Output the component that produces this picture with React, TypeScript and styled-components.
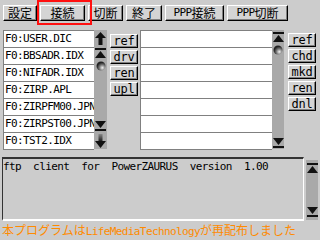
import React from "react";
import styled, { createGlobalStyle } from "styled-components";

const mono = `"DejaVu Sans Mono", "Liberation Mono", monospace`;
const jp = `"Noto Sans CJK JP", "Noto Sans", sans-serif`;

const GlobalStyle = createGlobalStyle`
    html, body {
        margin: 0;
        padding: 0;
        background: #cccccc;
    }
`

const leftFiles = [
    "F0:USER.DIC",
    "F0:BBSADR.IDX",
    "F0:NIFADR.IDX",
    "F0:ZIRP.APL",
    "F0:ZIRPFM00.JPN",
    "F0:ZIRPST00.JPN",
    "F0:TST2.IDX",
];

const UpArrow = () => (
    <svg width="11" height="13" viewBox="0 0 11 13">
        <polygon points="5.5,0 11,6 7.5,6 7.5,13 3.5,13 3.5,6 0,6" fill="#111" />
    </svg>
)

const DownArrow = () => (
    <svg width="11" height="14" viewBox="0 0 11 14">
        <defs>
            <linearGradient id="stem" x1="0" y1="0" x2="0" y2="1">
                <stop offset="0" stopColor="#888" />
                <stop offset="1" stopColor="#111" />
            </linearGradient>
        </defs>
        <rect x="3.5" y="0" width="4" height="8" fill="url(#stem)" />
        <polygon points="0,7 11,7 5.5,14" fill="#111" />
    </svg>
)

const ToTop = () => (
    <svg width="11" height="10" viewBox="0 0 11 10">
        <rect x="0" y="0" width="11" height="2" fill="#111" />
        <polygon points="5.5,3 11,10 0,10" fill="#111" />
    </svg>
)

const ToBottom = () => (
    <svg width="11" height="10" viewBox="0 0 11 10">
        <polygon points="0,0 11,0 5.5,7" fill="#111" />
        <rect x="0" y="8" width="11" height="2" fill="#111" />
    </svg>
)

const Ball = () => (
    <svg width="10" height="10" viewBox="0 0 10 10">
        <defs>
            <radialGradient id="ball" cx="0.65" cy="0.7" r="0.6">
                <stop offset="0" stopColor="#f4f4f4" />
                <stop offset="0.55" stopColor="#777" />
                <stop offset="1" stopColor="#222" />
            </radialGradient>
        </defs>
        <circle cx="5" cy="5" r="4.5" fill="url(#ball)" />
    </svg>
)

export default function App() {
    return (
        <Screen>
            <GlobalStyle />
            <Toolbar>
                <ToolButton $w={34}>設定</ToolButton>
                <ToolButton $w={45}>接続</ToolButton>
                <ToolButton $w={35}>切断</ToolButton>
                <ToolButton $w={36}>終了</ToolButton>
                <ToolButton $w={59}><Latin>PPP</Latin>接続</ToolButton>
                <ToolButton $w={61}><Latin>PPP</Latin>切断</ToolButton>
                <Highlight />
            </Toolbar>

            <FilesRow>
                <FileList $w={91}>
                    {leftFiles.map((f) => (
                        <FileRow key={f}>{f}</FileRow>
                    ))}
                </FileList>
                <ScrollBar $w={13}>
                    <IconGroup>
                        <UpArrow />
                        <ToTop />
                        <Ball />
                    </IconGroup>
                    <IconGroup>
                        <ToBottom />
                        <DownArrow />
                    </IconGroup>
                </ScrollBar>
                <ButtonColumn $top={4} $ml={3}>
                    <SmallButton>ref</SmallButton>
                    <SmallButton>drv</SmallButton>
                    <SmallButton>ren</SmallButton>
                    <SmallButton>upl</SmallButton>
                </ButtonColumn>
                <FileList $w={132} $ml={2}>
                    {Array.from({ length: 7 }).map((_, i) => (
                        <FileRow key={i} />
                    ))}
                </FileList>
                <ScrollBar $w={12}>
                    <IconGroup>
                        <ToTop />
                        <Ball />
                    </IconGroup>
                    <IconGroup>
                        <ToBottom />
                    </IconGroup>
                </ScrollBar>
                <ButtonColumn $top={3} $ml={4}>
                    <SmallButton>ref</SmallButton>
                    <SmallButton>chd</SmallButton>
                    <SmallButton>mkd</SmallButton>
                    <SmallButton>ren</SmallButton>
                    <SmallButton>dnl</SmallButton>
                </ButtonColumn>
            </FilesRow>

            <MessageRow>
                <MessageBox>ftp  client  for  PowerZAURUS  version  1.00</MessageBox>
                <MessageScroll>
                    <ToTop />
                    <ToBottom />
                </MessageScroll>
            </MessageRow>

            <Footer>
                本プログラムは<Latin>LifeMediaTechnology</Latin>が再配布しました
            </Footer>
        </Screen>
    )
}

const Screen = styled.div`
    position: relative;
    width: 320px;
    height: 240px;
    overflow: hidden;
    background: #cccccc;
    display: flex;
    flex-direction: column;
    font-family: ${jp};
    color: #000;
`

const Toolbar = styled.div`
    display: flex;
    gap: 3px;
    padding: 5px 0 0 3px;
    height: 16px;
`

const ToolButton = styled.div<{ $w: number }>`
    box-sizing: border-box;
    width: ${(p) => p.$w}px;
    height: 16px;
    background: #d4d4d4;
    border: 1px solid;
    border-color: #ffffff #000000 #000000 #ffffff;
    box-shadow: inset -1px -1px 0 #808080;
    display: flex;
    align-items: center;
    justify-content: center;
    font-size: 12px;
    line-height: 14px;
`

const Latin = styled.span`
    font-family: ${mono};
    font-size: 11px;
    letter-spacing: -0.6px;
`

const Highlight = styled.div`
    position: absolute;
    left: 37px;
    top: 0;
    width: 55px;
    height: 25px;
    box-sizing: border-box;
    border: 2px solid #ff1010;
    pointer-events: none;
`

const FilesRow = styled.div`
    display: flex;
    margin-top: 9px;
    padding-left: 3px;
    height: 120px;
`

const FileList = styled.div<{ $w: number; $ml?: number }>`
    width: ${(p) => p.$w}px;
    margin-left: ${(p) => p.$ml ?? 0}px;
    border-top: 1px solid #808080;
    border-left: 1px solid #808080;
    box-sizing: border-box;
    display: flex;
    flex-direction: column;
`

const FileRow = styled.div`
    height: 16px;
    background: #ffffff;
    border-bottom: 1px solid #808080;
    padding-left: 1px;
    font-family: ${mono};
    font-size: 11px;
    letter-spacing: -0.6px;
    line-height: 16px;
    white-space: nowrap;
    overflow: hidden;
`

const ScrollBar = styled.div<{ $w: number }>`
    width: ${(p) => p.$w}px;
    height: 119px;
    background: #a9a9a9;
    display: flex;
    flex-direction: column;
    justify-content: space-between;
    align-items: center;
    padding: 2px 0 1px;
    box-sizing: border-box;
`

const IconGroup = styled.div`
    display: flex;
    flex-direction: column;
    align-items: center;
    gap: 3px;
`

const ButtonColumn = styled.div<{ $top: number; $ml: number }>`
    display: flex;
    flex-direction: column;
    gap: 2px;
    padding-top: ${(p) => p.$top}px;
    margin-left: ${(p) => p.$ml}px;
`

const SmallButton = styled.div`
    box-sizing: border-box;
    width: 28px;
    height: 14px;
    background: #d4d4d4;
    border: 1px solid;
    border-color: #ffffff #000000 #000000 #ffffff;
    box-shadow: inset -1px -1px 0 #808080;
    display: flex;
    align-items: center;
    justify-content: center;
    font-family: ${mono};
    font-size: 12px;
    letter-spacing: -0.3px;
    line-height: 12px;
`

const MessageRow = styled.div`
    display: flex;
    margin-top: 7px;
    padding-left: 2px;
    gap: 2px;
    height: 64px;
`

const MessageBox = styled.div`
    box-sizing: border-box;
    width: 302px;
    height: 64px;
    border-top: 2px solid #333333;
    border-left: 1px solid #333333;
    border-right: 1px solid #ffffff;
    border-bottom: 2px solid #ffffff;
    padding: 1px 0 0 0;
    font-family: ${mono};
    font-size: 11px;
    letter-spacing: -0.6px;
    line-height: 14px;
    white-space: pre;
    overflow: hidden;
`

const MessageScroll = styled.div`
    box-sizing: border-box;
    width: 12px;
    height: 60px;
    margin-top: 3px;
    background: #a9a9a9;
    display: flex;
    flex-direction: column;
    justify-content: space-between;
    align-items: center;
    padding: 3px 0 3px;
`

const Footer = styled.div`
    padding-left: 2px;
    margin-top: 1px;
    font-size: 12px;
    line-height: 15px;
    color: #ff8a00;
    white-space: nowrap;
`
